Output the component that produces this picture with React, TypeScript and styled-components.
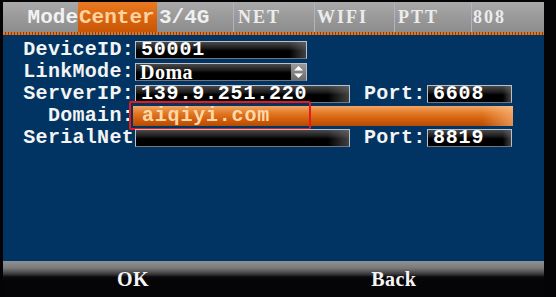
import React from "react";
import styled, { createGlobalStyle } from "styled-components";

const GlobalStyle = createGlobalStyle`
  html, body { margin: 0; padding: 0; background: #040407; overflow: hidden; }
  #root { width: 556px; height: 297px; }
`;

const Frame = styled.div`
  width: 556px;
  height: 297px;
  box-sizing: border-box;
  padding: 2px 12px 0 3px;
  display: flex;
  flex-direction: column;
  background: #040407;
`;

const TabBar = styled.div`
  height: 30px;
  display: flex;
  background: linear-gradient(#a9a9a9, #979797 60%, #8d8d8d);
`;

const Title = styled.div`
  width: 75px;
  box-sizing: border-box;
  text-align: right;
  font: bold 21px/31px "Liberation Mono", monospace;
  color: #f2f2f2;
`;

const Tab = styled.div<{ $w: number; $active?: boolean; $dim?: boolean; $pad?: number }>`
  width: ${(p) => p.$w}px;
  box-sizing: border-box;
  padding-left: ${(p) => p.$pad ?? 3}px;
  border-left: ${(p) => (p.$dim ? "1px solid #b4b4b4" : "none")};
  font-family: ${(p) => (p.$dim ? '"Liberation Serif", serif' : '"Liberation Mono", monospace')};
  font-weight: bold;
  font-size: ${(p) => (p.$dim ? 18 : 21)}px;
  letter-spacing: ${(p) => (p.$dim ? 2 : 0)}px;
  line-height: 31px;
  color: ${(p) => (p.$active ? "#ffd3a0" : p.$dim ? "#ececec" : "#f0f0f0")};
  background: ${(p) => (p.$active ? "linear-gradient(#ea7a22, #d8640e 55%, #c85606)" : "transparent")};
  white-space: nowrap;
`;

const Rule = styled.div`
  height: 3px;
  background: repeating-linear-gradient(90deg, #d6782c 0 2px, #8e3c12 2px 3px);
`;

const Panel = styled.div`
  flex: 1;
  background: #013462;
  padding: 4px 0 0 20px;
  display: flex;
  flex-direction: column;
`;

const Row = styled.div`
  height: 22px;
  display: flex;
  align-items: center;
  position: relative;
`;

const Label = styled.div<{ $w?: number }>`
  width: ${(p) => p.$w ?? 111}px;
  text-align: right;
  font: bold 20px/22px "Liberation Mono", monospace;
  letter-spacing: 0.3px;
  color: #f4f4f4;
  white-space: nowrap;
`;

const PortLabel = styled(Label)`
  margin-left: 14px;
  width: 62px;
  text-align: left;
`;

const Field = styled.div<{ $w: number }>`
  width: ${(p) => p.$w}px;
  height: 18px;
  box-sizing: border-box;
  margin-left: 1px;
  padding-left: 5px;
  border: 1px solid #b9c0c8;
  border-bottom-color: #6f7680;
  background:
    linear-gradient(90deg, rgba(0,0,0,0) 90%, rgba(110,110,110,0.6) 100%),
    linear-gradient(#4a4a4a, #1a1a1a 40%, #000 55%);
  font: bold 20px/16px "Liberation Mono", monospace;
  letter-spacing: 0.8px;
  color: #ffffff;
  white-space: nowrap;
`;

const Select = styled(Field)`
  display: flex;
  align-items: center;
  padding-left: 4px;
  font: bold 20px/16px "Liberation Serif", serif;
  letter-spacing: 0.5px;
`;

const SelectText = styled.span`
  flex: 1;
`;

const Spinner = styled.div`
  width: 15px;
  height: 16px;
  background: linear-gradient(#9a9a9a, #6c6c6c);
  display: flex;
  align-items: center;
  justify-content: center;
`;

const Highlight = styled.div`
  position: relative;
  width: 380px;
  height: 20px;
  margin-left: -1px;
  padding-left: 9px;
  box-sizing: border-box;
  background:
    linear-gradient(90deg, rgba(255,255,255,0) 92%, rgba(255,200,150,0.55) 100%),
    linear-gradient(#f2a566, #e27a26 35%, #d4600c 65%, #b44c04);
  font: bold 20px/20px "Liberation Mono", monospace;
  letter-spacing: 0.8px;
  color: #ffd8a8;
  white-space: nowrap;
`;

const Marker = styled.div`
  position: absolute;
  left: -4px;
  top: -5px;
  width: 182px;
  height: 29px;
  box-sizing: border-box;
  border: 2px solid #e8191b;
  border-radius: 2px;
`;

const Footer = styled.div`
  height: 36px;
  display: flex;
  padding-left: 114px;
  box-sizing: border-box;
  background: linear-gradient(#7d93aa 0, #8e8e8e 1px, #7a7a7a 7px, #3a3a3a 13px, #0a0a0c 16px, #050507 20px);
`;

const FooterButton = styled.div<{ $gap?: number }>`
  margin-left: ${(p) => p.$gap ?? 0}px;
  padding-top: 6px;
  font: bold 20px/24px "Liberation Serif", serif;
  letter-spacing: 0.5px;
  color: #f4f4f4;
`;

const Arrows = () => (
  <svg width="11" height="14" viewBox="0 0 11 14">
    <path d="M5.5 1 L10 5.5 L1 5.5 Z" fill="#fff" />
    <path d="M1 8.5 L10 8.5 L5.5 13 Z" fill="#fff" />
  </svg>
);

export default function App() {
  return (
    <>
      <GlobalStyle />
      <Frame>
        <TabBar>
          <Title>Mode</Title>
          <Tab $w={79} $active $pad={1}>Center</Tab>
          <Tab $w={76} $pad={2}>3/4G</Tab>
          <Tab $w={81} $dim $pad={4}>NET</Tab>
          <Tab $w={80} $dim $pad={2}>WIFI</Tab>
          <Tab $w={77} $dim $pad={3}>PTT</Tab>
          <Tab $w={73} $dim $pad={1}>808</Tab>
        </TabBar>
        <Rule />
        <Panel>
          <Row>
            <Label>DeviceID:</Label>
            <Field $w={172}>50001</Field>
          </Row>
          <Row>
            <Label>LinkMode:</Label>
            <Select $w={172}>
              <SelectText>Doma</SelectText>
              <Spinner><Arrows /></Spinner>
            </Select>
          </Row>
          <Row>
            <Label>ServerIP:</Label>
            <Field $w={215}>139.9.251.220</Field>
            <PortLabel>Port:</PortLabel>
            <Field $w={85}>6608</Field>
          </Row>
          <Row>
            <Label>Domain:</Label>
            <Highlight>
              aiqiyi.com
              <Marker />
            </Highlight>
          </Row>
          <Row>
            <Label>SerialNet</Label>
            <Field $w={215}></Field>
            <PortLabel>Port:</PortLabel>
            <Field $w={85}>8819</Field>
          </Row>
        </Panel>
        <Footer>
          <FooterButton>OK</FooterButton>
          <FooterButton $gap={222}>Back</FooterButton>
        </Footer>
      </Frame>
    </>
  );
}
